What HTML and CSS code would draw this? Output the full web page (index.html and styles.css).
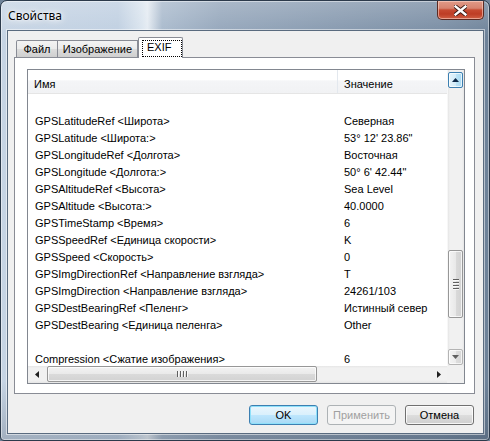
FILE: index.html
```html
<!DOCTYPE html>
<html lang="ru">
<head>
<meta charset="utf-8">
<title>Свойства</title>
<link rel="stylesheet" href="styles.css">
</head>
<body>
<div class="window">
  <div class="titlebar">
    <span class="title">Свойства</span>
    <div class="close">
      <svg width="13" height="11" viewBox="0 0 13 11">
        <path d="M1.5 1.5 L11.5 9.5 M11.5 1.5 L1.5 9.5" stroke="#3b1a14" stroke-width="4.2" stroke-linecap="square" fill="none"/>
        <path d="M1.5 1.5 L11.5 9.5 M11.5 1.5 L1.5 9.5" stroke="#ffffff" stroke-width="2.4" stroke-linecap="square" fill="none"/>
      </svg>
    </div>
  </div>
  <div class="client">
    <div class="tabs">
      <div class="tab t1">Файл</div>
      <div class="tab t2">Изображение</div>
      <div class="tab sel"><span class="focus">EXIF</span></div>
    </div>
    <div class="panel">
      <div class="listview">
        <div class="lv-body">
          <div class="header">
            <div class="hcol c1">Имя</div>
            <div class="hcol c2">Значение</div>
          </div>
          <div class="rows">
            <div class="row"><span class="c1"></span><span class="c2"></span></div>
            <div class="row"><span class="c1">GPSLatitudeRef &lt;Широта&gt;</span><span class="c2">Северная</span></div>
            <div class="row"><span class="c1">GPSLatitude &lt;Широта:&gt;</span><span class="c2">53° 12' 23.86"</span></div>
            <div class="row"><span class="c1">GPSLongitudeRef &lt;Долгота&gt;</span><span class="c2">Восточная</span></div>
            <div class="row"><span class="c1">GPSLongitude &lt;Долгота:&gt;</span><span class="c2">50° 6' 42.44"</span></div>
            <div class="row"><span class="c1">GPSAltitudeRef &lt;Высота&gt;</span><span class="c2">Sea Level</span></div>
            <div class="row"><span class="c1">GPSAltitude &lt;Высота:&gt;</span><span class="c2">40.0000</span></div>
            <div class="row"><span class="c1">GPSTimeStamp &lt;Время&gt;</span><span class="c2">6</span></div>
            <div class="row"><span class="c1">GPSSpeedRef &lt;Единица скорости&gt;</span><span class="c2">K</span></div>
            <div class="row"><span class="c1">GPSSpeed &lt;Скорость&gt;</span><span class="c2">0</span></div>
            <div class="row"><span class="c1">GPSImgDirectionRef &lt;Направление взгляда&gt;</span><span class="c2">T</span></div>
            <div class="row"><span class="c1">GPSImgDirection &lt;Направление взгляда&gt;</span><span class="c2">24261/103</span></div>
            <div class="row"><span class="c1">GPSDestBearingRef &lt;Пеленг&gt;</span><span class="c2">Истинный север</span></div>
            <div class="row"><span class="c1">GPSDestBearing &lt;Единица пеленга&gt;</span><span class="c2">Other</span></div>
            <div class="row"><span class="c1"></span><span class="c2"></span></div>
            <div class="row"><span class="c1">Compression &lt;Сжатие изображения&gt;</span><span class="c2">6</span></div>
          </div>
        </div>
        <div class="vscroll">
          <div class="vbtn hover">
            <svg width="7" height="4" viewBox="0 0 7 4"><polygon points="3.5,0 7,4 0,4" fill="#0d2a4a"/></svg>
          </div>
          <div class="vthumb">
            <div class="grip-h"></div><div class="grip-h"></div><div class="grip-h"></div><div class="grip-h"></div>
          </div>
          <div class="vbtn down">
            <svg width="7" height="4" viewBox="0 0 7 4"><polygon points="0,0 7,0 3.5,4" fill="#606060"/></svg>
          </div>
        </div>
        <div class="hscroll">
          <div class="hbtn">
            <svg width="4" height="7" viewBox="0 0 4 7"><polygon points="4,0 4,7 0,3.5" fill="#202020"/></svg>
          </div>
          <div class="hthumb">
            <div class="grip-v"></div><div class="grip-v"></div><div class="grip-v"></div><div class="grip-v"></div>
          </div>
          <div class="hbtn right">
            <svg width="4" height="7" viewBox="0 0 4 7"><polygon points="0,0 4,3.5 0,7" fill="#202020"/></svg>
          </div>
        </div>
        <div class="corner"></div>
      </div>
    </div>
    <div class="buttons">
      <div class="btn default">OK</div>
      <div class="btn disabled">Применить</div>
      <div class="btn">Отмена</div>
    </div>
  </div>
</div>
</body>
</html>
```

FILE: styles.css
```css
* { box-sizing: border-box; }
html, body { margin: 0; padding: 0; }
body {
  width: 490px;
  height: 441px;
  overflow: hidden;
  font-family: "Liberation Sans", Arial, sans-serif;
  font-size: 11px;
  color: #000;
  background: #6f8399;
}

.window {
  width: 490px;
  height: 441px;
  border: 1px solid #2c3a4b;
  border-radius: 7px 7px 4px 4px;
  background:
    linear-gradient(180deg, rgba(255,255,255,0.22) 0, rgba(255,255,255,0) 36px, rgba(0,0,0,0) 380px, rgba(20,30,45,0.2) 100%),
    linear-gradient(90deg, #c6d4e4 0%, #bfcfe1 24%, #dbe5ef 29%, #e4ebf2 30%, #a8b9cc 33%, #93a5ba 45%, #8497ad 70%, #788ca3 90%, #6d8299 100%);
  box-shadow: inset 0 0 0 1px rgba(255,255,255,0.45);
  overflow: hidden;
}

.titlebar {
  height: 29px;
  display: flex;
  align-items: flex-start;
}
.title {
  margin-left: 7px;
  margin-top: 8px;
  font-family: "Noto Sans", "Open Sans", sans-serif;
  font-size: 12px;
  line-height: 14px;
  color: #000;
  text-shadow: 0 0 6px #fff, 0 0 10px rgba(255,255,255,0.9), 0 0 2px rgba(255,255,255,0.9);
}
.close {
  margin-left: auto;
  margin-right: 5px;
  width: 47px;
  height: 19px;
  border: 1px solid #5b2a22;
  border-top: none;
  border-radius: 0 0 5px 5px;
  background: linear-gradient(180deg, #e09a88 0%, #d6836f 40%, #c64a31 50%, #bd3d25 72%, #cf5f44 100%);
  box-shadow: inset 0 0 0 1px rgba(255,220,210,0.55);
  display: flex;
  align-items: center;
  justify-content: center;
}
.close svg { display: block; margin-top: 1px; }

.client {
  margin-left: 6px;
  width: 477px;
  height: 404px;
  border: 1px solid #5a6b7f;
  box-shadow: 0 0 0 1px rgba(255,255,255,0.5);
  background: #f0f0f0;
}

.tabs {
  height: 26px;
  padding-left: 8px;
  display: flex;
  align-items: flex-end;
}
.tab {
  height: 17px;
  border: 1px solid #898c95;
  border-bottom: none;
  background: linear-gradient(180deg, #f3f3f3 0%, #ebebeb 50%, #dddddd 50%, #cfcfcf 100%);
  line-height: 15px;
  text-align: center;
  padding-top: 1px;
}
.t1 { width: 42px; border-radius: 2px 0 0 0; }
.t2 { width: 80px; border-left: none; }
.tab.sel {
  width: 45px;
  height: 21px;
  margin-bottom: -1px;
  background: #fff;
  border-radius: 2px 2px 0 0;
  position: relative;
  z-index: 1;
  padding: 2px 1px 1px 3px;
  text-align: left;
}
.focus {
  display: block;
  width: 40px;
  height: 17px;
  border: 1px dotted #000;
  line-height: 13px;
  padding-left: 4px;
}

.panel {
  margin-left: 6px;
  width: 461px;
  height: 337px;
  border: 1px solid #898c95;
  background: #fff;
  padding: 11px 0 0 12px;
}

.listview {
  width: 438px;
  height: 315px;
  border: 1px solid #828790;
  background: #fff;
  display: grid;
  grid-template-columns: 419px 17px;
  grid-template-rows: 296px 17px;
}
.lv-body { overflow: hidden; }

.header {
  height: 24px;
  display: flex;
  border-bottom: 1px solid #e5e5e5;
  background: linear-gradient(180deg, #ffffff 0%, #ffffff 45%, #f4f5f7 46%, #f1f2f4 100%);
}
.hcol {
  padding-top: 8px;
  line-height: 13px;
}
.hcol.c1 { width: 310px; padding-left: 6px; border-right: 1px solid #e3e8ee; }
.hcol.c2 { flex: 1; padding-left: 6px; }

.rows { padding-top: 2px; }
.row {
  height: 17px;
  line-height: 17px;
  display: flex;
  white-space: nowrap;
}
.row .c1 { width: 310px; padding-left: 7px; overflow: visible; }
.row .c2 { padding-left: 6px; }

.vscroll {
  display: flex;
  flex-direction: column;
  background: linear-gradient(90deg, #e6e6e6 0, #f1f1f1 2px, #f1f1f1 14px, #e6e6e6 100%);
  border-left: 1px solid #f7f7f7;
}
.vbtn {
  height: 17px;
  display: flex;
  align-items: center;
  justify-content: center;
}
.vbtn.hover {
  height: 16px;
  margin: 2px 1px 0 0;
  border: 1px solid #3c7fb1;
  border-radius: 2px;
  background: linear-gradient(90deg, #e5f4fc 0%, #d3ecf9 50%, #bde4f7 51%, #a8d9f2 100%);
  box-shadow: inset 0 0 0 1px rgba(255,255,255,0.7);
}
.vbtn.down {
  height: 16px;
  margin: 0 1px 1px 0;
  border: 1px solid #b4b4b4;
  border-radius: 2px;
  background: linear-gradient(90deg, #f4f4f4 0%, #ececec 50%, #dedede 51%, #d6d6d6 100%);
  box-shadow: inset 0 0 0 1px rgba(255,255,255,0.7);
}
.vthumb {
  height: 69px;
  margin: 162px 1px 31px 0;
  border: 1px solid #979797;
  border-radius: 2px;
  background: linear-gradient(90deg, #f3f3f3 0%, #e9e9e9 50%, #dadada 51%, #d2d2d2 100%);
  box-shadow: inset 0 0 0 1px rgba(255,255,255,0.75);
  display: flex;
  flex-direction: column;
  align-items: center;
  justify-content: center;
  gap: 1px;
}
.grip-h {
  width: 6px;
  height: 2px;
  border-top: 1px solid #5f5f5f;
  border-bottom: 1px solid #f8f8f8;
  margin-left: 1px;
}

.hscroll {
  display: flex;
  align-items: stretch;
  background: linear-gradient(180deg, #e6e6e6 0, #f1f1f1 2px, #f1f1f1 14px, #e6e6e6 100%);
}
.hbtn {
  width: 17px;
  display: flex;
  align-items: center;
  justify-content: center;
}
.hbtn.right { margin-left: auto; }
.hthumb {
  width: 270px;
  margin: 0 0 1px 2px;
  border: 1px solid #979797;
  border-radius: 2px;
  background: linear-gradient(180deg, #f3f3f3 0%, #e9e9e9 50%, #dadada 51%, #d2d2d2 100%);
  box-shadow: inset 0 0 0 1px rgba(255,255,255,0.75);
  display: flex;
  align-items: center;
  justify-content: center;
  gap: 1px;
}
.grip-v {
  width: 2px;
  height: 6px;
  border-left: 1px solid #5f5f5f;
  border-right: 1px solid #f8f8f8;
}
.corner { background: #f0f0f0; }

.buttons {
  margin-top: 11px;
  padding-right: 9px;
  display: flex;
  justify-content: flex-end;
  gap: 9px;
}
.btn {
  width: 69px;
  height: 20px;
  border: 1px solid #707070;
  border-radius: 3px;
  background: linear-gradient(180deg, #f2f2f2 0%, #ebebeb 50%, #dddddd 51%, #cfcfcf 100%);
  box-shadow: inset 0 0 0 1px rgba(255,255,255,0.8);
  text-align: center;
  line-height: 18px;
}
.btn.default {
  border-color: #3c7fb1;
  background: linear-gradient(180deg, #eaf6fd 0%, #d9f0fc 50%, #bee6fd 51%, #a7d9f5 100%);
  box-shadow: inset 0 0 0 1px #8ee0fa;
}
.btn.disabled {
  border-color: #adb2b5;
  background: #f4f4f4;
  box-shadow: none;
  color: #a0a0a0;
}
```
